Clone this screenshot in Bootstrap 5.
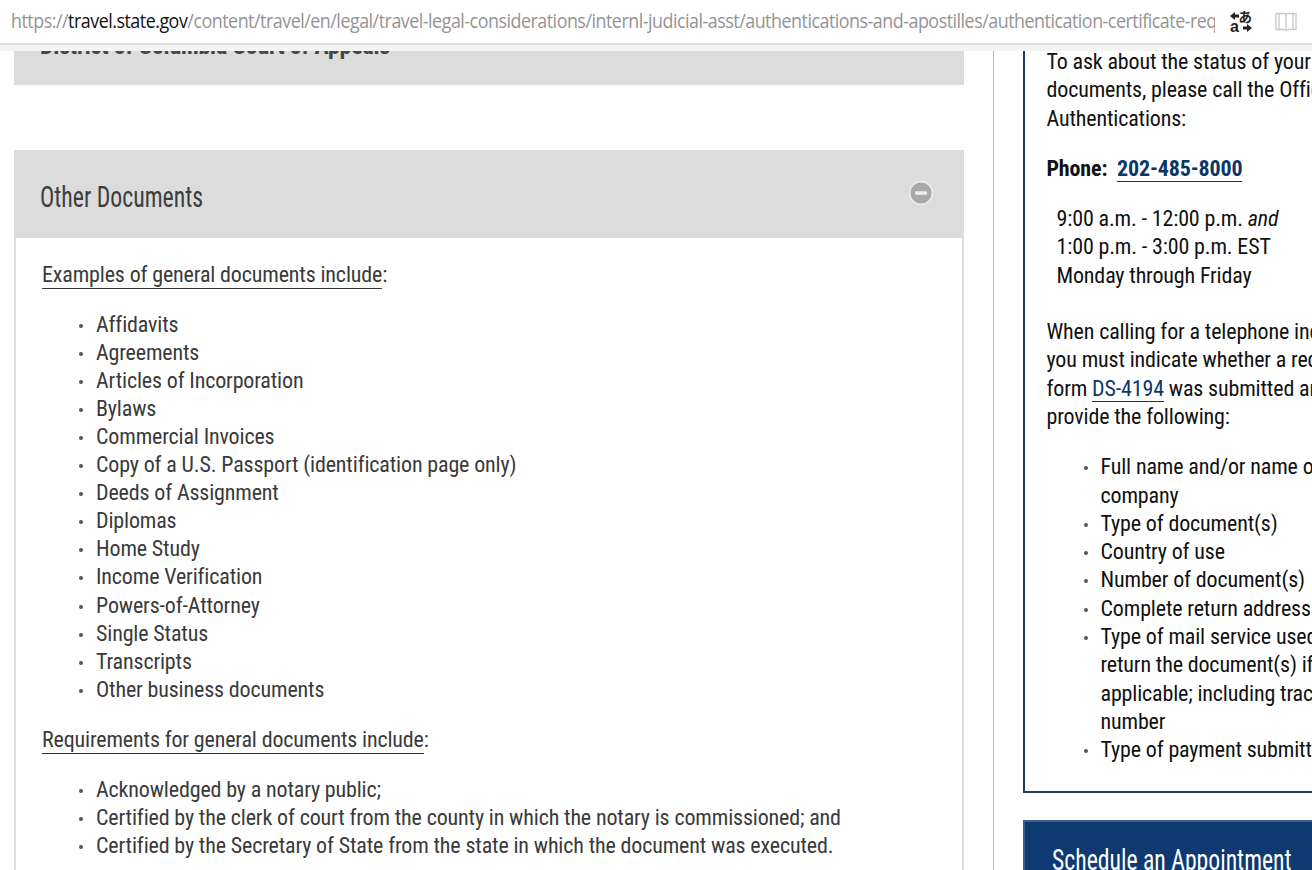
<!DOCTYPE html>
<html lang="en"><head><meta charset="utf-8"><title>Authentication Certificate Request</title>
<link href="https://cdn.jsdelivr.net/npm/bootstrap@5.3.0/dist/css/bootstrap.min.css" rel="stylesheet">
<style>
html,body{height:870px;overflow:hidden;background:#fff}
body{font-family:"Roboto Condensed",Roboto,sans-serif;font-stretch:condensed;font-size:22px;line-height:28.1px;letter-spacing:-.15px;color:#3a3a3a}
.urlbar{height:43px;padding:0 15px 0 11px;font-family:"Open Sans",sans-serif;font-stretch:normal;font-size:20px;letter-spacing:-.55px;color:#949494}
.urltext{width:1206px;white-space:nowrap;overflow:hidden}
.urlinner{display:inline-block;transform:scaleX(.894);transform-origin:left center}
.urltext b{font-weight:400;color:#111}
.iconset{gap:23px;margin-left:15px}
.urlband{height:8px;background:#f4f4f4;border-top:2px solid #dcdcdc}
.shell{height:819px;overflow:hidden}
.leftcol{width:950px;margin-left:14px;flex:none}
.headclip{height:34px;background:#dcdcdc;overflow:hidden;padding-left:26px;font-weight:700;font-size:23.8px;color:#444;margin-bottom:65px}
.headclip span{display:block;margin-top:-19px}
.panelhead{height:88px;background:#dcdcdc;padding:0 30px 2px 26px;color:#3d3d3d}
.tallhead{display:inline-block;font-size:29px;line-height:34px;letter-spacing:0;transform:scaleX(.82);transform-origin:left center;padding-top:8px;white-space:nowrap}
.panelbody{border:solid #dedede;border-width:0 2px;padding:23px 0 0 26px;height:720px}
.panelbody p{margin:0 0 21.5px}
.u{text-decoration:none;border-bottom:1px solid #333;color:#3a3a3a;padding-bottom:1px}
ul.tight{list-style:none;margin:0 0 22px;padding:0 0 0 54px}
ul.tight li{position:relative}
ul.tight li::before{content:"";position:absolute;left:-17px;top:13px;width:4px;height:4px;border-radius:50%;background:#555}
.vrule{width:1px;background:#bbb;margin-left:29px;flex:none}
.rightcol{margin-left:29px;width:420px;flex:none;color:#111}
.infobox{height:742px;line-height:28.3px;border:solid #1d3f63;border-width:0 0 2px 2px;padding-left:21.5px;margin-bottom:27px;overflow:hidden}
.infobox>:first-child{margin-top:-3px}
.infobox p{margin:0 0 22px;white-space:nowrap}
.infobox .hours{margin-bottom:28px}
.infobox a{color:#0b3668;text-decoration:none;border-bottom:1px solid #0b3668}
.infobox ul{padding-left:54px;color:#111;white-space:nowrap}
.hours{padding-left:10px}
.phone{font-weight:700}
.blue{background:#0e3a71;border-top:2px solid #3b5f8d;border-left:2px solid #3b5f8d;padding:21px 27px;color:#fff;height:100px}
.tallblue{display:inline-block;font-size:30px;line-height:34px;letter-spacing:0;transform:scaleX(.79);transform-origin:left center;white-space:nowrap}
</style></head><body>
<div class="urlbar d-flex align-items-center">
<div class="urltext"><span class="urlinner">https://<b>travel.state.gov</b>/content/travel/en/legal/travel-legal-considerations/internl-judicial-asst/authentications-and-apostilles/authentication-certificate-request</span></div>
<div class="d-flex align-items-center iconset">
<svg width="22" height="22" viewBox="0 0 22 22"><path d="M0 5 5 1v2.500h4v3H5V9zM22 17l-5 4v-2.500h-4v-3h4V13z" fill="#222"/><text x="8.500" y="11" font-family="Noto Sans CJK JP" font-size="13.500" font-weight="700" fill="#222">あ</text><text x="0" y="21" font-family="Liberation Sans" font-size="16" font-weight="700" fill="#222">a</text></svg>
<svg width="22" height="20" viewBox="0 0 22 20" fill="none" stroke="#c8c8c8" stroke-width="1.300"><path d="M1 1.500h9l1 1 1-1h9v16h-8l-2 1-2-1H1zM11 2.500v16M4 1.500v16M18 1.500v16"/></svg>
</div></div>
<div class="urlband"></div>
<div class="shell d-flex">
<main class="leftcol">
<div class="headclip"><span>District of Columbia Court of Appeals</span></div>
<div class="panelhead d-flex align-items-center justify-content-between"><span class="tallhead">Other Documents</span>
<svg width="26" height="26" viewBox="0 0 26 26"><circle cx="13" cy="13" r="11.500" fill="#a9a9a9" stroke="#e9e9e9" stroke-width="2"/><rect x="7" y="11.300" width="12" height="3.400" rx="1.200" fill="#eee"/></svg></div>
<div class="panelbody">
<p><span class="u">Examples of general documents include</span>:</p>
<ul class="tight">
<li>Affidavits</li><li>Agreements</li><li>Articles of Incorporation</li><li>Bylaws</li><li>Commercial Invoices</li><li>Copy of a U.S. Passport (identification page only)</li><li>Deeds of Assignment</li><li>Diplomas</li><li>Home Study</li><li>Income Verification</li><li>Powers-of-Attorney</li><li>Single Status</li><li>Transcripts</li><li>Other business documents</li>
</ul>
<p><span class="u">Requirements for general documents include</span>:</p>
<ul class="tight">
<li>Acknowledged by a notary public;</li><li>Certified by the clerk of court from the county in which the notary is commissioned; and</li><li>Certified by the Secretary of State from the state in which the document was executed.</li>
</ul>
</div>
</main>
<div class="vrule"></div>
<aside class="rightcol">
<div class="infobox">
<p>To ask about the status of your<br>documents, please call the Office of<br>Authentications:</p>
<p class="phone">Phone:&nbsp; <a href="#">202-485-8000</a></p>
<p class="hours">9:00 a.m. - 12:00 p.m. <em>and</em><br>1:00 p.m. - 3:00 p.m. EST<br>Monday through Friday</p>
<p>When calling for a telephone inquiry,<br>you must indicate whether a request<br>form <a href="#">DS-4194</a> was submitted and<br>provide the following:</p>
<ul class="tight">
<li>Full name and/or name of<br>company</li><li>Type of document(s)</li><li>Country of use</li><li>Number of document(s)</li><li>Complete return address</li><li>Type of mail service used to<br>return the document(s) if<br>applicable; including tracking<br>number</li><li>Type of payment submitted</li>
</ul>
</div>
<div class="blue"><span class="tallblue">Schedule an Appointment</span></div>
</aside>
</div>
</body></html>
